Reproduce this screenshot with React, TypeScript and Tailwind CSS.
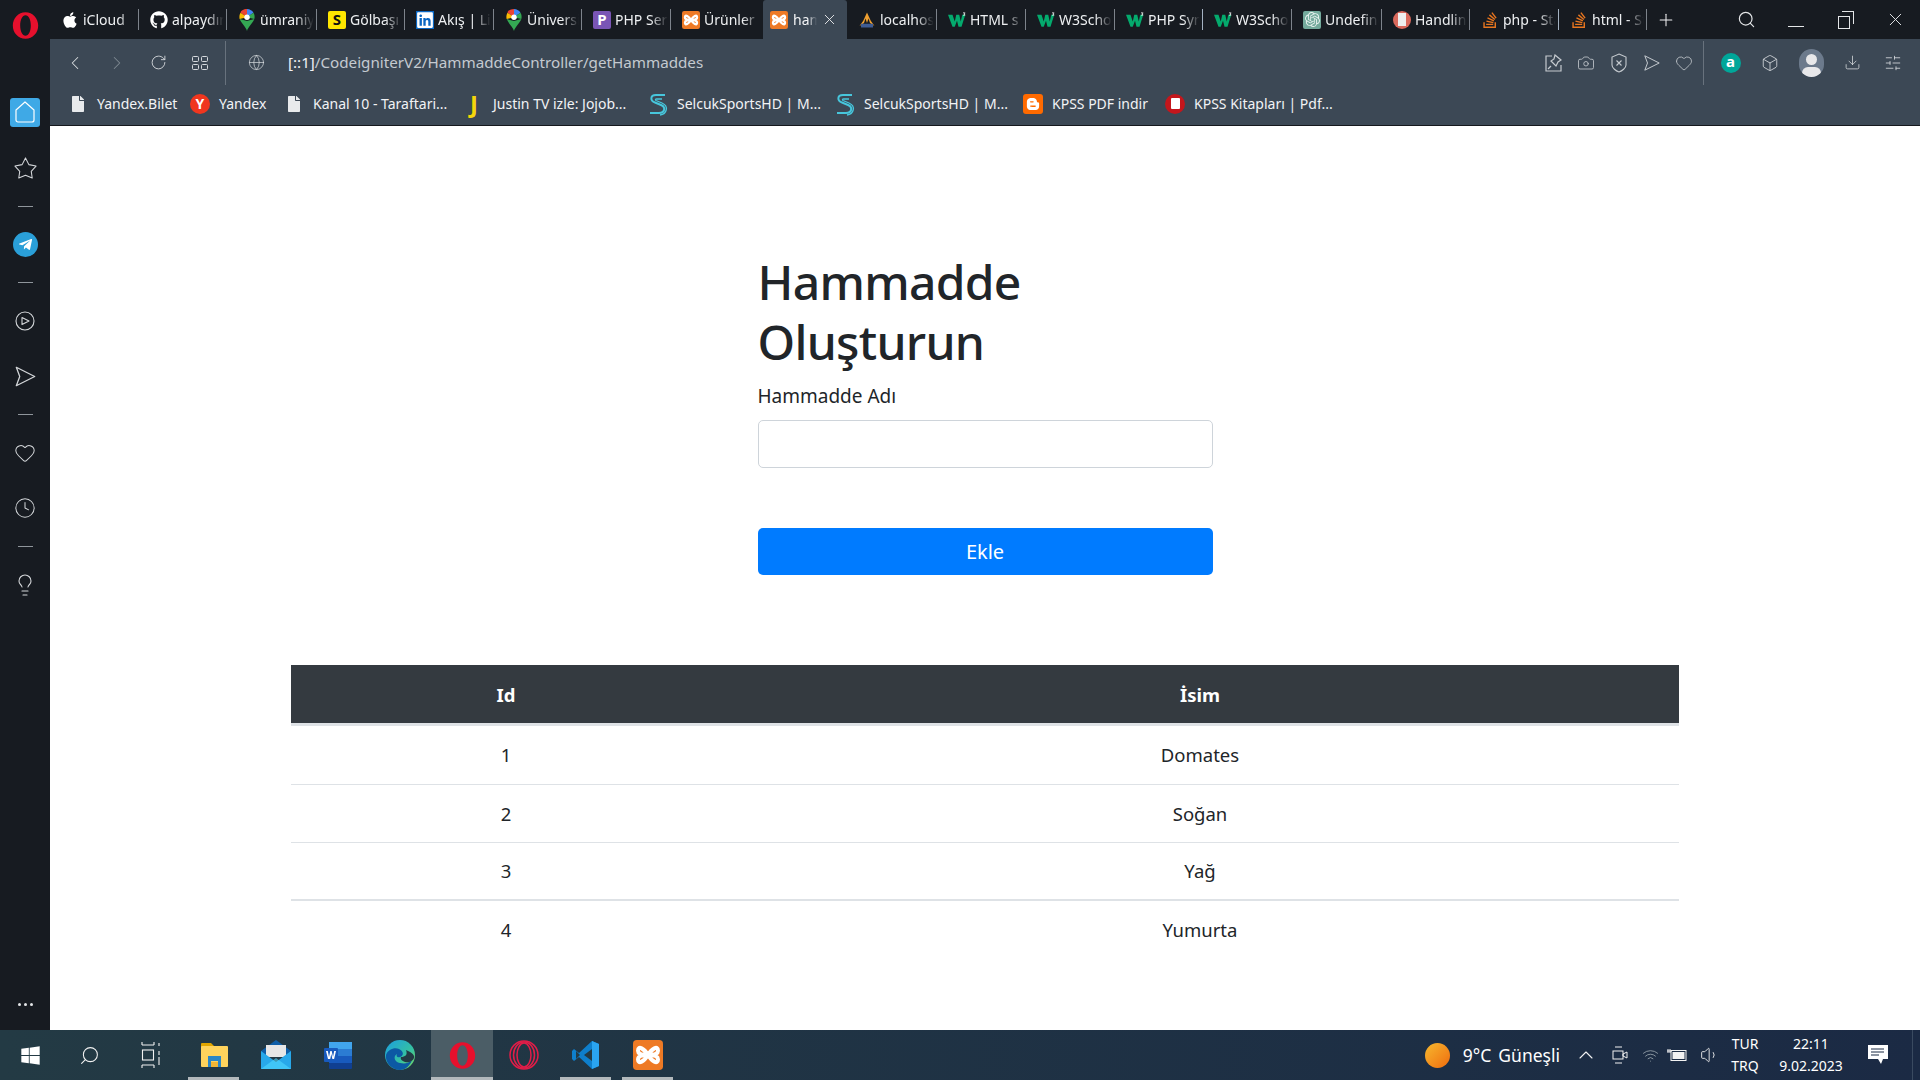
import React from 'react';
import {
  ChevronLeft,
  ChevronRight,
  RotateCw,
  Globe,
  Camera,
  Box,
  Download,
  SlidersHorizontal,
  Heart,
  Clock,
  Lightbulb,
  Search,
  X,
  Plus,
  ChevronUp,
  Volume1,
  Wifi,
} from 'lucide-react';
import { FaApple, FaGithub, FaLinkedin, FaStackOverflow, FaBloggerB, FaFile, FaWindows, FaTelegramPlane } from 'react-icons/fa';
import { SiOpenai } from 'react-icons/si';

const Opera = ({ size = 28, color = '#e6102d' }: { size?: number; color?: string }) => (
  <svg width={size} height={size} viewBox="0 0 24 24">
    <path fillRule="evenodd" fill={color} d="M12 1c6 0 10.500 5 10.500 11S18 23 12 23 1.500 18 1.500 12 6 1 12 1zm0 2.500c-2.600 0-4.400 3.800-4.400 8.500s1.800 8.500 4.400 8.500 4.400-3.800 4.400-8.500S14.600 3.500 12 3.500z" />
  </svg>
);

const MapsPin = () => (
  <svg width="18" height="22" viewBox="0 0 18 24">
    <path fill="#34a853" d="M9 24c-1-4-6-8-8-13l8 2 8-2c-2 5-7 9-8 13z" />
    <path fill="#4285f4" d="M9 0c3 0 6 2 7 4l-7 5z" />
    <path fill="#ea4335" d="M9 0C5 0 2 2 2 4l7 5z" />
    <path fill="#fbbc04" d="M2 4c-1.500 2-1.500 5-1 7l8-2z" />
    <path fill="#34a853" d="M16 4c1.500 2 1.500 5 1 7l-8-2z" />
    <circle cx="9" cy="9" r="3" fill="#fff" />
  </svg>
);

const W3 = () => (
  <svg width="18" height="16" viewBox="0 0 24 20">
    <path fill="#04aa6d" d="M0 3h6l3 9 2-9h4l2 9 2-9h4l-5 16h-4l-2-8-3 8H6z" />
    <path fill="#fff" d="M20 0h3v1l-1 1 1 1v1h-3V3h2l-1-1 1-1h-2z" />
  </svg>
);

const Xampp = ({ size = 18 }: { size?: number }) => (
  <svg width={size} height={size} viewBox="0 0 24 24">
    <rect width="24" height="24" rx="3" fill="#ee7a25" />
    <path d="M12 12C9 7 4 4 4 8.500c0 3 4 3.500 8 3.500-4 0-8 .500-8 3.500C4 20 9 17 12 12c3 5 8 8 8 3.500 0-3-4-3.500-8-3.500 4 0 8-.500 8-3.500C20 4 15 7 12 12z" fill="none" stroke="#fff" strokeWidth="3.200" strokeLinejoin="round" />
  </svg>
);

const Pma = () => (
  <svg width="20" height="20" viewBox="0 0 24 24">
    <path fill="#f0a030" d="M12 2l5 11 5 7-6-4-2-6-2 6-2-6-2 6-6 4 5-7z" />
    <rect x="4" y="17" width="16" height="5" fill="#3f5c94" />
  </svg>
);

const SquareIcon = ({ bg, fg, ch }: { bg: string; fg: string; ch: string }) => (
  <span className="flex h-[18px] w-[18px] items-center justify-center rounded-[2px] text-[15px] font-bold" style={{ background: bg, color: fg }}>{ch}</span>
);

const So = () => <FaStackOverflow size={18} color="#e8761f" />;

const tabs = [
  { label: 'iCloud', icon: <FaApple size={18} color="#fff" />, w: 'w-[89px]' },
  { label: 'alpaydın', icon: <FaGithub size={18} color="#fff" />, w: 'w-[88px]' },
  { label: 'ümraniye', icon: <MapsPin />, w: 'w-[90px]' },
  { label: 'Gölbaşı', icon: <SquareIcon bg="#ffe600" fg="#111" ch="S" />, w: 'w-[88px]' },
  { label: 'Akış | LinkedIn', icon: <span className="flex h-[18px] w-[18px] items-center justify-center bg-[#0a66c2]"><FaLinkedin size={18} color="#fff" /></span>, w: 'w-[89px]' },
  { label: 'Üniversite', icon: <MapsPin />, w: 'w-[88px]' },
  { label: 'PHP Servis', icon: <SquareIcon bg="#7a55b5" fg="#fff" ch="P" />, w: 'w-[89px]' },
  { label: 'Ürünler', icon: <Xampp />, w: 'w-[92px]', noSep: true },
];

const tabsAfter = [
  { label: 'localhost', icon: <Pma />, w: 'w-[90px]' },
  { label: 'HTML s', icon: <W3 />, w: 'w-[89px]' },
  { label: 'W3Schools', icon: <W3 />, w: 'w-[89px]' },
  { label: 'PHP Syntax', icon: <W3 />, w: 'w-[88px]', bright: true },
  { label: 'W3Schools', icon: <W3 />, w: 'w-[89px]' },
  { label: 'Undefined', icon: <span className="flex h-[18px] w-[18px] items-center justify-center rounded-[2px] bg-[#74aa9c]"><SiOpenai size={15} color="#e8f2ef" /></span>, w: 'w-[90px]' },
  { label: 'Handling', icon: <span className="flex h-[18px] w-[18px] items-center justify-center rounded-full bg-[#d9695c]"><span className="h-[13px] w-[8px] bg-[#eee]" /></span>, w: 'w-[88px]' },
  { label: 'php - Stack', icon: <So />, w: 'w-[89px]', bright: true },
  { label: 'html - Stack', icon: <So />, w: 'w-[88px]' },
];

type TabData = { label: string; icon: React.ReactNode; w: string; noSep?: boolean; bright?: boolean };

const Tab = ({ tab }: { tab: TabData }) => (
  <div className={`${tab.w} flex h-[21px] shrink-0 items-center gap-[4px] pl-[11px] ${tab.noSep ? '' : 'border-r'} ${tab.bright ? 'border-[#a4b2c2]' : 'border-[#7d838b]'}`}>
    <span className="flex w-[18px] shrink-0 items-center justify-center">{tab.icon}</span>
    <span className="min-w-0 flex-1 overflow-hidden whitespace-nowrap pr-[2px] text-[14px] text-[#eef0f2] [mask-image:linear-gradient(to_right,black_65%,transparent_96%)]">{tab.label}</span>
  </div>
);

const TabStrip = () => (
  <div className="flex h-[39px] shrink-0 items-center">
    <div className="flex">
      {tabs.map((t, i) => <Tab key={i} tab={t} />)}
    </div>
    <div className="flex h-[39px] w-[84px] shrink-0 items-center rounded-t-[3px] bg-[#3c4855] pl-[7px]">
      <Xampp />
      <span className="ml-[5px] w-[24px] overflow-hidden whitespace-nowrap text-[14px] text-[#f3f4f6] [mask-image:linear-gradient(to_right,black_60%,transparent)]">hammadde</span>
      <X size={17} strokeWidth={1.25} color="#f1f2f4" className="ml-[4px]" />
    </div>
    <div className="flex">
      {tabsAfter.map((t, i) => <Tab key={i} tab={t} />)}
    </div>
    <div className="flex h-[39px] flex-1 items-center">
      <Plus size={20} strokeWidth={1.25} color="#f1f2f4" className="ml-[9px]" />
      <Search size={19} strokeWidth={1.5} color="#e4e6e8" className="ml-[61px]" />
      {/* window controls */}
      <span className="ml-[32px] mt-[13px] h-px w-[16px] bg-[#e4e6e8]" />
      <span className="relative ml-[34px] h-[18px] w-[16px]">
        <span className="absolute bottom-0 left-0 h-[13px] w-[12px] border border-[#e4e6e8]" />
        <span className="absolute right-0 top-0 h-[13px] w-[12px] border-r border-t border-[#e4e6e8]" />
      </span>
      <X size={21} strokeWidth={1.1} color="#e4e6e8" className="ml-[31px]" />
    </div>
  </div>
);

const NavBtn = ({ children, w }: { children: React.ReactNode; w: string }) => (
  <span className={`flex shrink-0 items-center justify-center ${w}`}>{children}</span>
);

const GridIcon = () => (
  <svg width="16" height="16" viewBox="0 0 16 16" fill="none" stroke="#d4d8dd" strokeWidth="1">
    <rect x="0.500" y="1.500" width="6" height="5" rx="1" />
    <rect x="9.500" y="1.500" width="6" height="5" rx="1" />
    <rect x="0.500" y="9.500" width="6" height="5" rx="1" />
    <rect x="9.500" y="9.500" width="6" height="5" rx="1" />
  </svg>
);

const SendIcon = ({ size = 18, color = '#c5cacf' }: { size?: number; color?: string }) => (
  <svg width={size} height={size} viewBox="0 0 20 20" fill="none" stroke={color} strokeWidth="1.100" strokeLinejoin="round">
    <path d="M2 2l16 8-16 8 3-8z" />
  </svg>
);

const PinIcon = () => (
  <svg width="18" height="18" viewBox="0 0 18 18" fill="none" stroke="#c5cacf" strokeWidth="1.200">
    <path d="M7 2H1v15h15v-6" />
    <path d="M10 1l6 5-3 2-2 4-5-5 3-2z" />
    <path d="M6 12l-3 3" />
  </svg>
);

const ShieldIcon = () => (
  <svg width="16" height="20" viewBox="0 0 16 20" fill="none" stroke="#c5cacf" strokeWidth="1.100">
    <path d="M8 1l7 3v8c0 3-4 6-7 7-3-1-7-4-7-7V4z" />
    <path d="M5.500 7.500l5 5m0-5l-5 5" />
  </svg>
);

const Toolbar = () => (
  <div className="flex h-[86px] shrink-0 flex-col bg-[#3c4855]">
    <div className="flex h-[47px] items-center pl-[4px]">
      <NavBtn w="w-[42px]"><ChevronLeft size={22} strokeWidth={1.1} color="#d8dcdf" /></NavBtn>
      <NavBtn w="w-[42px]"><ChevronRight size={22} strokeWidth={1.1} color="#7f8992" /></NavBtn>
      <NavBtn w="w-[41px]"><RotateCw size={17} strokeWidth={1.25} color="#d8dcdf" /></NavBtn>
      <NavBtn w="w-[42px]"><GridIcon /></NavBtn>
      <span className="ml-[4px] h-[44px] w-px bg-[#68727d]" />
      <NavBtn w="w-[60px]"><Globe size={17} strokeWidth={1} color="#d8dcdf" /></NavBtn>
      <span className="ml-[2px] text-[15.200px] text-[#c4cad0]"><span className="text-[#f2f3f5]">[::1]</span>/CodeigniterV2/HammaddeController/getHammaddes</span>
      <div className="ml-auto flex items-center">
        <NavBtn w="w-[33px]"><PinIcon /></NavBtn>
        <NavBtn w="w-[32px]"><Camera size={18} strokeWidth={1.1} color="#c5cacf" /></NavBtn>
        <NavBtn w="w-[33px]"><ShieldIcon /></NavBtn>
        <NavBtn w="w-[33px]"><SendIcon /></NavBtn>
        <NavBtn w="w-[32px]"><Heart size={18} strokeWidth={1.1} color="#c5cacf" /></NavBtn>
        <span className="ml-[3px] h-[44px] w-px bg-[#68727d]" />
        <NavBtn w="w-[53px]"><span className="flex h-[20px] w-[20px] items-center justify-center rounded-full bg-[#00a699] pb-[2px] text-[15px] font-bold text-white">a</span></NavBtn>
        <NavBtn w="w-[26px]"><Box size={18} strokeWidth={1.1} color="#d8dcdf" /></NavBtn>
        <NavBtn w="w-[56px]">
          <span className="relative h-[28px] w-[25px] overflow-hidden rounded-full bg-[#6c7a8c]">
            <span className="absolute left-[7px] top-[5px] h-[11px] w-[11px] rounded-full bg-[#e8e8ea]" />
            <span className="absolute left-[3px] top-[18px] h-[12px] w-[19px] rounded-full bg-[#e8e8ea]" />
          </span>
        </NavBtn>
        <NavBtn w="w-[26px]"><Download size={17} strokeWidth={1.1} color="#d8dcdf" /></NavBtn>
        <NavBtn w="w-[55px]"><SlidersHorizontal size={18} strokeWidth={1.1} color="#d8dcdf" /></NavBtn>
      </div>
    </div>
    <div className="flex h-[39px] items-center pb-[4px] pl-[18px]">
      {bookmarks.map((b, i) => (
        <div key={i} className={`flex shrink-0 items-center ${b.w}`}>
          <span className="flex w-[20px] shrink-0 items-center justify-center">{b.icon}</span>
          <span className="ml-[9px] whitespace-nowrap text-[14px] text-[#f2f3f5]">{b.label}</span>
        </div>
      ))}
    </div>
  </div>
);

const SelcukS = () => (
  <svg width="20" height="24" viewBox="0 0 20 24" fill="none" stroke="#47c6dc" strokeWidth="2">
    <path d="M17 3H8C2 3 2 9 7 10.500l6 2.500c5 2 4 8-2 8H2" />
    <path d="M14 7H8.500c-1 0-1.500 1-.5 1.500l6 2.500c7 3 5 11-2 12" strokeWidth="1.300" />
  </svg>
);

const bookmarks = [
  { label: 'Yandex.Bilet', w: 'w-[122px]', icon: <FaFile size={16} color="#e8eaec" /> },
  { label: 'Yandex', w: 'w-[94px]', icon: <span className="flex h-[20px] w-[20px] items-center justify-center rounded-full bg-[#f0361e] text-[14px] font-bold text-white">Y</span> },
  { label: 'Kanal 10 - Taraftari...', w: 'w-[180px]', icon: <FaFile size={16} color="#e8eaec" /> },
  { label: 'Justin TV izle: Jojob...', w: 'w-[184px]', icon: <span className="text-[24px] font-bold leading-none text-[#f5d60a]">J</span> },
  { label: 'SelcukSportsHD | M...', w: 'w-[187px]', icon: <SelcukS /> },
  { label: 'SelcukSportsHD | M...', w: 'w-[188px]', icon: <SelcukS /> },
  { label: 'KPSS PDF indir', w: 'w-[142px]', icon: <span className="flex h-[20px] w-[20px] items-center justify-center rounded-[3px] bg-[#ff6a00]"><FaBloggerB size={14} color="#fff" /></span> },
  { label: 'KPSS Kitapları | Pdf...', w: 'w-[190px]', icon: <span className="flex h-[20px] w-[20px] items-center justify-center rounded-full bg-[#c4161c]"><span className="h-[11px] w-[9px] rounded-[1px] bg-white" /></span> },
];

const SideSep = () => (
  <div className="flex h-[21px] items-center justify-center"><span className="h-px w-[15px] bg-[#8f959b]" /></div>
);

const SideItem = ({ children }: { children: React.ReactNode }) => (
  <div className="flex h-[55.500px] items-center justify-center">{children}</div>
);

const Sidebar = () => (
  <div className="flex w-[50px] shrink-0 flex-col bg-[#171b21]">
    <div className="flex h-[84.500px] justify-center pt-[11px]"><Opera size={29} /></div>
    <SideItem>
      <span className="flex h-[29px] w-[30px] items-center justify-center rounded-[3px] bg-[#3fa9e6]">
        <svg width="20" height="22" viewBox="0 0 20 22" fill="none" stroke="#fff" strokeWidth="1.200" strokeLinejoin="round"><path d="M10 1l9 8v10a2 2 0 01-2 2H3a2 2 0 01-2-2V9z" /></svg>
      </span>
    </SideItem>
    <SideItem>
      <svg width="23" height="23" viewBox="0 0 24 24" fill="none" stroke="#d4d7da" strokeWidth="1.100" strokeLinejoin="round"><path d="M12 2l3.500 7 7.500 1.500-5 5.500 1 7-7-3-7 3 1-7-5-5.500L8.500 9z" /></svg>
    </SideItem>
    <SideSep />
    <SideItem>
      <span className="flex h-[25px] w-[25px] items-center justify-center rounded-full bg-[#2a9fd8]"><FaTelegramPlane size={15} color="#fff" /></span>
    </SideItem>
    <SideSep />
    <SideItem>
      <svg width="20" height="20" viewBox="0 0 20 20" fill="none" stroke="#d4d7da" strokeWidth="1.100"><circle cx="10" cy="10" r="9" /><path d="M7 6.500l7 3.500-7 3.500z" strokeLinejoin="round" /></svg>
    </SideItem>
    <SideItem><SendIcon size={23} color="#d4d7da" /></SideItem>
    <SideSep />
    <SideItem><Heart size={22} strokeWidth={1.1} color="#d4d7da" /></SideItem>
    <SideItem><Clock size={22} strokeWidth={1.1} color="#d4d7da" /></SideItem>
    <SideSep />
    <SideItem><Lightbulb size={24} strokeWidth={1.1} color="#d4d7da" /></SideItem>
    <div className="mt-auto flex h-[52px] items-center justify-center gap-[3px]">
      <span className="h-[3px] w-[3px] rounded-full bg-[#e4e6e8]" />
      <span className="h-[3px] w-[3px] rounded-full bg-[#e4e6e8]" />
      <span className="h-[3px] w-[3px] rounded-full bg-[#e4e6e8]" />
    </div>
  </div>
);

const rows = [
  { id: 1, name: 'Domates', border: 'border-b' },
  { id: 2, name: 'Soğan', border: 'border-b' },
  { id: 3, name: 'Yağ', border: 'border-b-2' },
  { id: 4, name: 'Yumurta', border: '' },
];

const Page = () => (
  <div className="flex flex-1 flex-col items-center border-t border-[#15181d] bg-white pt-[126px] text-[#212529]">
    <div className="w-[455px]">
      <h1 className="w-[330px] text-[48px] font-medium leading-[60px] tracking-[-0.7px]">Hammadde Oluşturun</h1>
      <label className="mt-[9px] block text-[19px] leading-[30px]">Hammadde Adı</label>
      <input className="mt-[9px] block h-[48px] w-full rounded-[5px] border border-[#ced4da] bg-white" />
      <button className="mt-[60px] block h-[47px] w-full rounded-[5px] bg-[#007bff] text-[20px] text-white">Ekle</button>
    </div>
    <table className="mt-[90px] w-[1388px] table-fixed border-collapse text-center text-[18.500px]">
      <thead>
        <tr className="h-[58px] bg-[#343a40] text-white">
          <th className="w-[430px] pt-[2px] font-bold">Id</th>
          <th className="pt-[2px] font-bold">İsim</th>
        </tr>
      </thead>
      <tbody>
        <tr className="h-[3px] bg-[#dee2e6]"><td colSpan={2} className="p-0" /></tr>
        {rows.map((r) => (
          <tr key={r.id} className={`h-[58px] border-[#dee2e6] ${r.border}`}>
            <td className="pt-[1px]">{r.id}</td>
            <td className="pt-[1px]">{r.name}</td>
          </tr>
        ))}
      </tbody>
    </table>
  </div>
);

const WordIcon = () => (
  <svg width="30" height="30" viewBox="0 0 30 30">
    <rect x="6" y="2" width="23" height="7" fill="#41a5ee" />
    <rect x="6" y="9" width="23" height="7" fill="#2b7cd3" />
    <rect x="6" y="16" width="23" height="7" fill="#185abd" />
    <rect x="6" y="23" width="23" height="6" rx="1" fill="#103f91" />
    <rect x="1" y="8" width="14" height="14" rx="1" fill="#185abd" />
    <path d="M3 11h1.800l1.200 6 1.300-6h1.400l1.300 6 1.200-6H13l-1.900 8H9.400l-1.100-5-1.100 5H5z" fill="#fff" />
  </svg>
);

const ExplorerIcon = () => (
  <svg width="28" height="28" viewBox="0 0 28 28">
    <path d="M1 3a1 1 0 011-1h9l3 3v4H1z" fill="#e0a500" />
    <rect x="1" y="5" width="27" height="21" rx="1" fill="#ffd35c" />
    <path d="M8 15h13v11h-3v-6h-7v6H8z" fill="#2b86c5" />
    <rect x="11" y="21" width="7" height="5" fill="#f2b635" />
  </svg>
);

const MailIcon = () => (
  <svg width="30" height="30" viewBox="0 0 30 30">
    <path d="M0 11L15 0l15 11v4H0z" fill="#0f5ea8" />
    <path d="M5 5h20v12H5z" fill="#e6e6e6" />
    <path d="M0 11l15 11 15-11v18H0z" fill="#28a8ea" />
    <path d="M0 29l15-11 15 11z" fill="#50d9ff" opacity="0.600" />
  </svg>
);

const EdgeIcon = () => (
  <svg width="30" height="30" viewBox="0 0 30 30">
    <defs>
      <linearGradient id="edgeTop" x1="0" y1="0" x2="1" y2="1">
        <stop offset="0" stopColor="#1b9de2" />
        <stop offset="0.600" stopColor="#35c1a1" />
        <stop offset="1" stopColor="#7fdc5c" />
      </linearGradient>
    </defs>
    <circle cx="15" cy="15" r="15" fill="url(#edgeTop)" />
    <path d="M1 15c2-6 9-8 13-6 5 2 5 7 1 8-3 .800-4-1-3-3-4 2-3 8 3 9 5 1 9 0 12-3-2 6-7 10-12 10C7 30 0 23 1 15z" fill="#0c59a4" />
    <path d="M16 17c4 0 7-2 5-7 4 2 9 4 8 8-1 3-5 5-9 4-3-1-5-3-4-5z" fill="#233a44" />
  </svg>
);

const VsCodeIcon = () => (
  <svg width="28" height="30" viewBox="0 0 28 30">
    <path d="M20 1l7 3v22l-7 3-13-12-5 4-2-2v-8l2-2 5 4z" fill="#0e7fcc" />
    <path d="M20 1l7 3v22l-7 3z" fill="#2aa4f0" />
    <path d="M20 9l-8 6 8 6z" fill="#233a44" />
    <path d="M4 11l4 4-4 4z" fill="#233a44" />
  </svg>
);

const TaskBtn = ({ children, active, running }: { children: React.ReactNode; active?: boolean; running?: boolean }) => (
  <div className={`relative flex h-[50px] w-[62px] shrink-0 items-center justify-center ${active ? 'bg-[#4b5d66]' : ''}`}>
    {children}
    {active && <span className="absolute inset-x-0 bottom-0 h-[3px] bg-[#b3b9bc]" />}
    {running && <span className="absolute bottom-0 left-[5px] h-[3px] w-[51px] bg-[#b3b9bc]" />}
  </div>
);

const Taskbar = () => (
  <div className="flex h-[50px] shrink-0 items-center bg-gradient-to-r from-[#233a44] to-[#1b2a44] text-white">
    <div className="flex h-full w-[60px] items-center justify-center"><FaWindows size={21} color="#fff" /></div>
    <div className="flex h-full w-[58px] items-center justify-center"><Search size={21} strokeWidth={1.2} color="#f2f2f2" className="-scale-x-100" /></div>
    <div className="flex h-full w-[65px] items-center justify-center">
      <svg width="20" height="26" viewBox="0 0 20 26" fill="none" stroke="#f2f2f2" strokeWidth="1.100">
        <path d="M1 3h12M1 0v3M13 0v3M1 23h12M1 23v3M13 23v3" />
        <rect x="1.500" y="8" width="11" height="10" />
        <path d="M18 1v3M18 9v4M18 15v8" />
      </svg>
    </div>
    <TaskBtn running><ExplorerIcon /></TaskBtn>
    <TaskBtn><MailIcon /></TaskBtn>
    <TaskBtn><WordIcon /></TaskBtn>
    <TaskBtn><EdgeIcon /></TaskBtn>
    <TaskBtn active><Opera size={29} /></TaskBtn>
    <TaskBtn>
      <svg width="30" height="30" viewBox="0 0 30 30" fill="none" stroke="#e11d48" strokeWidth="1.500"><ellipse cx="15" cy="15" rx="14" ry="14" /><ellipse cx="15" cy="15" rx="7" ry="12" /><ellipse cx="15" cy="15" rx="10.500" ry="13" /></svg>
    </TaskBtn>
    <TaskBtn running><VsCodeIcon /></TaskBtn>
    <TaskBtn running><Xampp size={30} /></TaskBtn>
    <div className="ml-auto flex h-full items-center">
      <span className="h-[25px] w-[25px] rounded-full bg-gradient-to-br from-[#f5b82e] to-[#ee6a0c]" />
      <span className="ml-[13px] text-[17.500px]">9°C</span>
      <span className="ml-[7px] text-[17.500px]">Güneşli</span>
      <ChevronUp size={24} strokeWidth={1.1} color="#f2f2f2" className="ml-[14px]" />
      <svg className="ml-[14px]" width="16" height="20" viewBox="0 0 16 20" fill="none" stroke="#f2f2f2" strokeWidth="1"><path d="M3 2h7M3 18h7" /><rect x="1" y="6" width="10" height="8" /><path d="M11 9l4-2v6l-4-2z" /></svg>
      <Wifi size={17} strokeWidth={1.2} color="#9aa5ae" className="ml-[14px]" />
      <svg className="ml-[8px]" width="20" height="14" viewBox="0 0 20 14" fill="none" stroke="#f2f2f2" strokeWidth="1"><rect x="4" y="2.500" width="15" height="10" /><rect x="6" y="4.500" width="11" height="6" fill="#f2f2f2" /><path d="M0 3h5M1 1v4M3 1v4" /></svg>
      <Volume1 size={20} strokeWidth={1.1} color="#f2f2f2" className="ml-[13px]" />
      <div className="ml-[10px] flex w-[30px] flex-col items-center text-[14px] leading-[22px]"><span>TUR</span><span>TRQ</span></div>
      <div className="ml-[15px] flex w-[72px] flex-col items-center text-[14px] leading-[22px]"><span>22:11</span><span>9.02.2023</span></div>
      <div className="flex h-full w-[73px] items-center pl-[21px]">
        <svg width="20" height="20" viewBox="0 0 20 20"><path d="M0 0h20v14h-5l-2 5-3-5H0z" fill="#fff" /><path d="M3 4h13M3 7h13M3 10h8" stroke="#1b2a44" strokeWidth="1" /></svg>
        <span className="ml-[24px] h-full w-px bg-[#3a4a60]" />
      </div>
    </div>
  </div>
);

export default function App() {
  return (
    <div className="flex h-[1080px] w-[1920px] flex-col overflow-hidden font-['Noto_Sans',sans-serif]">
      <div className="flex h-[1030px]">
        <Sidebar />
        <div className="flex min-w-0 flex-1 flex-col bg-[#171b21]">
          <TabStrip />
          <Toolbar />
          <Page />
        </div>
      </div>
      <Taskbar />
    </div>
  );
}
